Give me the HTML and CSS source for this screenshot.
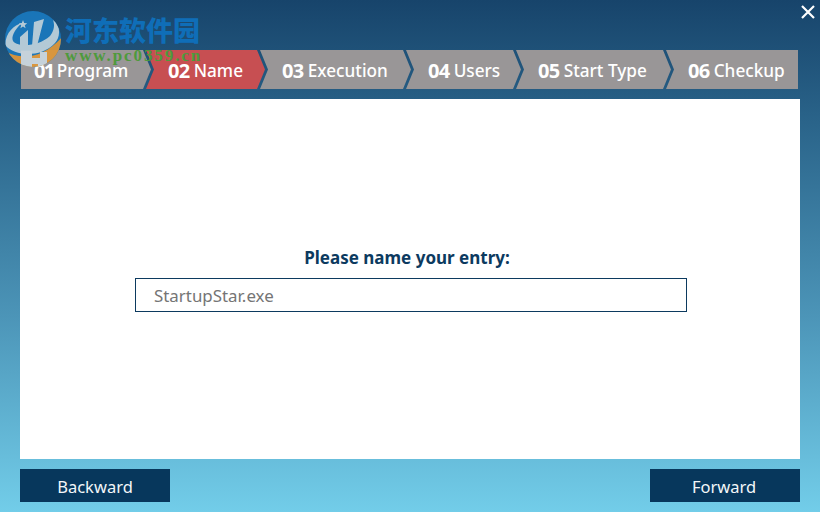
FILE: index.html
```html
<!DOCTYPE html>
<html lang="en">
<head>
<meta charset="utf-8">
<title>StartupStar</title>
<link rel="stylesheet" href="styles.css">
</head>
<body>
<div class="window">
  <div class="watermark">
    <svg class="wm-logo" width="58" height="58" viewBox="0 0 58 58">
      <defs><clipPath id="disc"><circle cx="29" cy="29" r="28"/></clipPath></defs>
      <g clip-path="url(#disc)">
        <rect width="58" height="58" fill="#1a78bc"/>
        <path d="M0 40 C14 50 38 50 58 27 L58 58 L0 58 Z" fill="#dd963a"/>
        <path d="M1 35 C2 22 10 15 18 13 C10 20 7 27 9 31 C13 37 34 37 46 26 C50 21 51 15 49 10 L53 13 C57 22 55 30 49 35 C38 46 12 48 1 35 Z" fill="#bcd0dc"/>
        <path d="M16 27 L24 20 L24 36 L16 36 Z M30 12 L40 9 L33 36 L28 36 Z" fill="#bcd0dc"/>
        <path d="M17 41 H28 V48 H36 V42 H43 V58 H34 V54 H28 V58 H17 Z" fill="#c9d6de"/>
        <path d="M19 10 l1.2 3 3 .2 -2.4 2 .8 3 -2.6 -1.7 -2.6 1.7 .8 -3 -2.4 -2 3 -.2z" fill="#bcd0dc"/>
      </g>
    </svg>
    <div class="wm-text">
      <div class="wm-title">河东软件园</div>
      <div class="wm-url">www.pc0359.cn</div>
    </div>
  </div>
  <header class="topbar">
    <button class="close" aria-label="Close">
      <svg width="16" height="16" viewBox="0 0 16 16"><path d="M2 2 L14 14 M14 2 L2 14" stroke="#fff" stroke-width="2.2" fill="none"/></svg>
    </button>
  </header>
  <nav class="steps">
    <div class="step step-1"><b>01</b> Program</div>
    <div class="step step-2 active"><b>02</b> Name</div>
    <div class="step step-3"><b>03</b> Execution</div>
    <div class="step step-4"><b>04</b> Users</div>
    <div class="step step-5"><b>05</b> Start Type</div>
    <div class="step step-6"><b>06</b> Checkup</div>
  </nav>
  <main class="panel">
    <label class="prompt" for="entry">Please name your entry:</label>
    <input class="entry" id="entry" type="text" value="StartupStar.exe">
  </main>
  <footer class="actions">
    <button class="btn">Backward</button>
    <button class="btn btn-next">Forward</button>
  </footer>
</div>
</body>
</html>
```
FILE: styles.css
```css
* { box-sizing: border-box; }
html, body { margin: 0; padding: 0; }
body { width: 820px; height: 512px; overflow: hidden; font-family: "Noto Sans", "Open Sans", sans-serif; }
.window {
  position: relative;
  width: 820px;
  height: 512px;
  display: flex;
  flex-direction: column;
  background: linear-gradient(180deg, #17446b 0%, #2a648a 24%, #4c95b8 62%, #72cde9 100%);
}
.topbar { height: 50px; display: flex; justify-content: flex-end; align-items: flex-start; padding: 4px 4px 0 0; }
.close { width: 16px; height: 16px; padding: 0; border: 0; background: none; display: block; }
.close svg { display: block; }
.watermark { position: absolute; left: 4px; top: 10px; display: flex; z-index: 3; pointer-events: none; }
.wm-logo { display: block; opacity: .95; }
.wm-text { margin-left: 3px; }
.wm-title { font-family: "Noto Sans CJK SC", sans-serif; font-weight: 900; font-size: 27px; line-height: 38px; margin-top: 1px; color: #0f6eb8; white-space: nowrap; }
.wm-url { font-family: "Liberation Serif", serif; font-weight: 700; font-size: 17px; line-height: 18px; margin-top: -2px; letter-spacing: 1.9px; color: #4e9a3c; white-space: nowrap; }
.steps { display: flex; height: 39px; margin-left: 21px; }
.step {
  flex: none;
  height: 39px;
  margin-left: -5px;
  padding: 2px 0 0 22px;
  display: flex;
  align-items: center;
  gap: 4px;
  color: #fff;
  background: #999697;
  font-size: 17.2px;
  font-weight: 500;
  white-space: nowrap;
  clip-path: polygon(0 0, calc(100% - 8px) 0, 100% 50%, calc(100% - 8px) 100%, 0 100%, 8px 50%);
}
.step b { font-size: 20px; font-weight: 700; letter-spacing: -.6px; }
.step.active { background: #c74f52; }
.step-1 { width: 130px; margin-left: 0; padding-left: 13px; gap: 3px; clip-path: polygon(0 0, calc(100% - 8px) 0, 100% 50%, calc(100% - 8px) 100%, 0 100%); }
.step-1 b { letter-spacing: -1.6px; }
.step-2 { width: 119px; }
.step-3 { width: 151px; }
.step-4 { width: 115px; }
.step-5 { width: 155px; }
.step-6 { width: 132px; clip-path: polygon(0 0, 100% 0, 100% 100%, 0 100%, 8px 50%); }
.panel {
  height: 360px;
  margin: 10px 20px;
  background: #fff;
  display: flex;
  flex-direction: column;
  align-items: center;
  padding: 146px 0 0 2px;
}
.prompt { font-size: 17px; line-height: 26px; font-weight: 700; color: #0c3a5f; margin: 0 8px 7px 0; }
.entry {
  width: 552px;
  height: 34px;
  border: 1px solid #0c3a5f;
  border-radius: 0;
  outline: 0;
  padding: 0 18px;
  font-family: inherit;
  font-size: 16.9px;
  color: #757575;
  background: #fff;
}
.actions { display: flex; justify-content: space-between; padding: 0 20px; }
.btn {
  width: 150px;
  height: 33px;
  border: 0;
  padding: 2px 0 0;
  background: #07375c;
  color: #f2f6f8;
  font-family: inherit;
  font-size: 16.5px;
}
.btn-next { padding-right: 2px; }
```
